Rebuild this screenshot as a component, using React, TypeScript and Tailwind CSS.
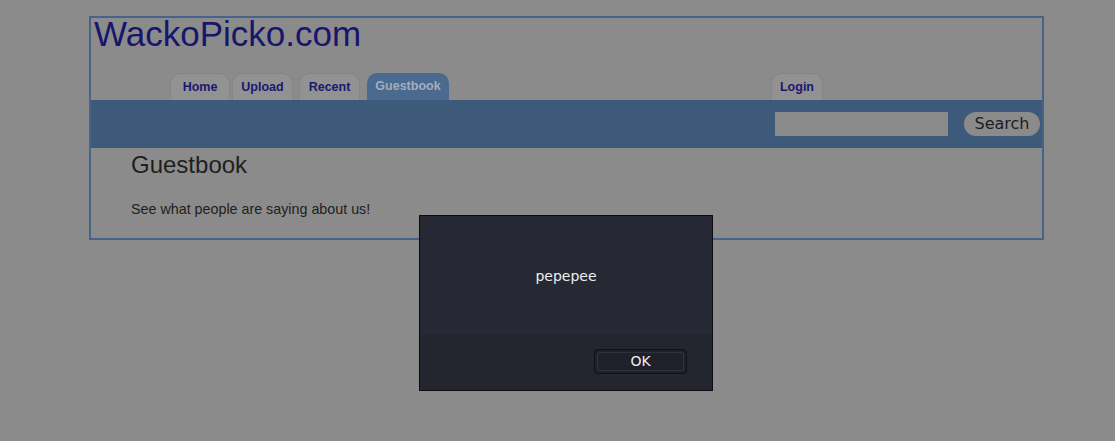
import React from "react";

const Tab = ({ label, w, active = false }: { label: string; w: string; active?: boolean }) => (
  <div
    className={
      active
        ? `${w} h-[27px] rounded-t-[10px] bg-[#4a6a8f] flex items-center justify-center text-[12.5px] font-bold text-[#a4adbb]`
        : `${w} h-[27px] rounded-t-[10px] bg-[#929292] border border-b-0 border-[#858585] flex items-center justify-center text-[12.5px] font-bold text-[#1a1870]`
    }
  >
    {label}
  </div>
);

export default function App() {
  return (
    <div className="relative w-[1115px] h-[441px] bg-[#8b8b8b] overflow-hidden font-['Liberation_Sans',Arial,sans-serif]">
      <div className="ml-[89px] mt-[16px] w-[955px] h-[224px] border-2 border-[#48638a] flex flex-col">
        <div className="h-[56px] pl-[3px] text-[35px] leading-[32px] text-[#18166c]">WackoPicko.com</div>
        <div className="flex items-end h-[26px]">
          <div className="ml-[79px] flex items-end">
            <Tab label="Home" w="w-[60px]" />
            <div className="w-[2px]" />
            <Tab label="Upload" w="w-[61px]" />
            <div className="w-[6px]" />
            <Tab label="Recent" w="w-[61px]" />
            <div className="w-[7px]" />
            <Tab label="Guestbook" w="w-[82px]" active />
          </div>
          <div className="ml-[322px]">
            <Tab label="Login" w="w-[52px]" />
          </div>
        </div>
        <div className="h-[48px] bg-[#3d5a7b] flex items-center justify-end pr-[2px]">
          <div className="w-[173px] h-[24px] bg-[#8b8b8b]" />
          <div className="ml-[16px] w-[76px] h-[24px] rounded-full bg-[#8b8b8b] flex items-center justify-center text-[16px] text-[#1e1e1e] font-['DejaVu_Sans',sans-serif]">
            Search
          </div>
        </div>
        <div className="pl-[40px] text-[#1e1e1e]">
          <h1 className="mt-[3px] text-[24px] leading-[28px]">Guestbook</h1>
          <p className="mt-[21px] text-[14.3px] leading-[18px]">See what people are saying about us!</p>
        </div>
      </div>

      <div className="absolute left-[419px] top-[215px] w-[294px] h-[176px] border border-[#0c0c10] bg-[#262833] flex flex-col font-['DejaVu_Sans',sans-serif]">
        <div className="h-[118px] flex items-center justify-center text-[14px] text-[#eeeeee] pt-[2px]">pepepee</div>
        <div className="flex-1 bg-[#23252f] flex items-start justify-end pr-[25px] pt-[15px]">
          <div className="w-[93px] h-[25px] rounded-[4px] border border-[#101117] bg-[#1f2029] p-[2px]">
            <div className="w-full h-full rounded-[2px] border border-[#2f313b] flex items-center justify-center text-[14px] text-[#eeeeee]">
              OK
            </div>
          </div>
        </div>
      </div>
    </div>
  );
}
